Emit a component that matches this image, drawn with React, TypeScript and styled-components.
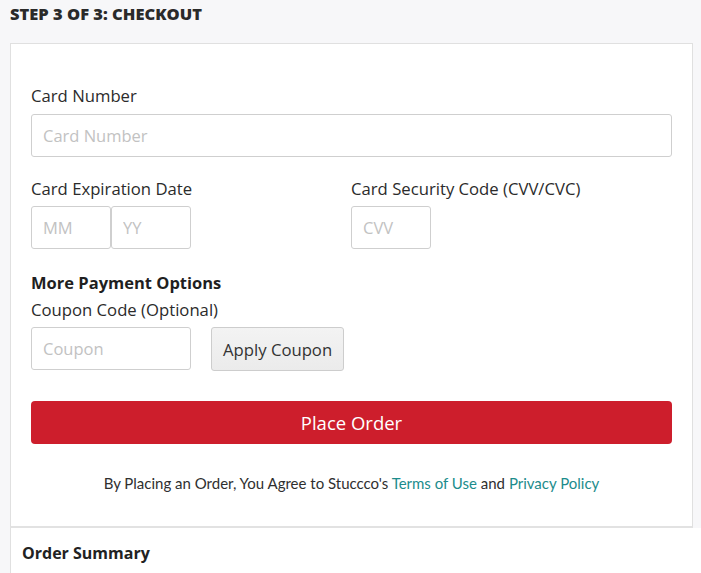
import React from "react";
import styled, { createGlobalStyle } from "styled-components";

const Global = createGlobalStyle`
  html, body { margin: 0; padding: 0; background: #f7f7f9; }
  body { font-family: "Open Sans", "Liberation Sans", sans-serif; color: #2b2b2b; }
  * { box-sizing: border-box; }
`;

const Page = styled.div`
  width: 701px;
  height: 573px;
  overflow: hidden;
  display: flex;
  flex-direction: column;
`;

const StepTitle = styled.h1`
  flex-shrink: 0;
  margin: 0;
  height: 43px;
  padding: 3px 10px 0;
  font-size: 16.5px;
  line-height: 22px;
  font-weight: 800;
  color: #2a2a2a;
`;

const Card = styled.section`
  flex-shrink: 0;
  margin: 0 8px 0 10px;
  background: #fff;
  border: 1px solid #e0e0e0;
  border-bottom: 2px solid #e2e2e2;
  padding: 41px 20px 0;
`;

const Field = styled.div`
  display: flex;
  flex-direction: column;
`;

const Label = styled.label<{ $gap?: number }>`
  font-size: 16.7px;
  line-height: 22px;
  color: #2b2b2b;
  margin-bottom: ${(p) => p.$gap ?? 6}px;
`;

const Heading = styled.div`
  font-size: 16.5px;
  line-height: 22px;
  font-weight: 700;
  color: #1f1f1f;
  margin-top: 23px;
  margin-bottom: 5px;
`;

const Input = styled.input<{ $w?: number }>`
  width: ${(p) => (p.$w ? `${p.$w}px` : "100%")};
  height: 43px;
  border: 1px solid #cfcfcf;
  border-radius: 3px;
  padding: 0 11px;
  font-family: inherit;
  font-size: 16.5px;
  color: #333;
  background: #fff;
  outline: none;
  &::placeholder { color: #c2c2c2; }
`;

const TwoCol = styled.div`
  display: grid;
  grid-template-columns: 320px 1fr;
  margin-top: 21px;
`;

const Row = styled.div<{ $gap?: number }>`
  display: flex;
  align-items: flex-start;
  gap: ${(p) => p.$gap ?? 0}px;
`;

const GrayButton = styled.button`
  height: 44px;
  padding: 0 11px;
  border: 1px solid #cdcdcd;
  border-radius: 3px;
  background: linear-gradient(#f3f3f3, #ebebeb);
  font-family: inherit;
  font-size: 16.7px;
  color: #333;
`;

const PlaceOrder = styled.button`
  margin-top: 30px;
  width: 100%;
  height: 43px;
  border: none;
  border-radius: 4px;
  background: #cd1e2c;
  color: #fff;
  font-family: inherit;
  font-size: 18.5px;
  padding-bottom: 2px;
`;

const Agreement = styled.p`
  margin: 0;
  padding: 28px 0 32px;
  text-align: center;
  font-family: "Lato", "Liberation Sans", sans-serif;
  font-size: 15px;
  line-height: 22px;
  color: #2f2f2f;
`;

const Link = styled.a`
  color: #1c8c8c;
  text-decoration: none;
`;

const Summary = styled.section`
  flex: 1;
  margin-left: 10px;
  background: #fff;
  border-left: 1px solid #e0e0e0;
  padding: 14px 11px;
`;

const SummaryTitle = styled.h2`
  margin: 0;
  font-size: 16px;
  line-height: 22px;
  font-weight: 700;
  color: #222;
`;

export default function App() {
  return (
    <>
      <Global />
      <Page>
        <StepTitle>STEP 3 OF 3: CHECKOUT</StepTitle>
        <Card>
          <Field>
            <Label $gap={7}>Card Number</Label>
            <Input placeholder="Card Number" />
          </Field>
          <TwoCol>
            <Field>
              <Label>Card Expiration Date</Label>
              <Row>
                <Input $w={80} placeholder="MM" />
                <Input $w={80} placeholder="YY" />
              </Row>
            </Field>
            <Field>
              <Label>Card Security Code (CVV/CVC)</Label>
              <Row>
                <Input $w={80} placeholder="CVV" />
              </Row>
            </Field>
          </TwoCol>
          <Heading>More Payment Options</Heading>
          <Field>
            <Label>Coupon Code (Optional)</Label>
            <Row $gap={20}>
              <Input $w={160} placeholder="Coupon" />
              <GrayButton>Apply Coupon</GrayButton>
            </Row>
          </Field>
          <PlaceOrder>Place Order</PlaceOrder>
          <Agreement>
            By Placing an Order, You Agree to Stuccco's <Link href="#">Terms of Use</Link> and{" "}
            <Link href="#">Privacy Policy</Link>
          </Agreement>
        </Card>
        <Summary>
          <SummaryTitle>Order Summary</SummaryTitle>
        </Summary>
      </Page>
    </>
  );
}
